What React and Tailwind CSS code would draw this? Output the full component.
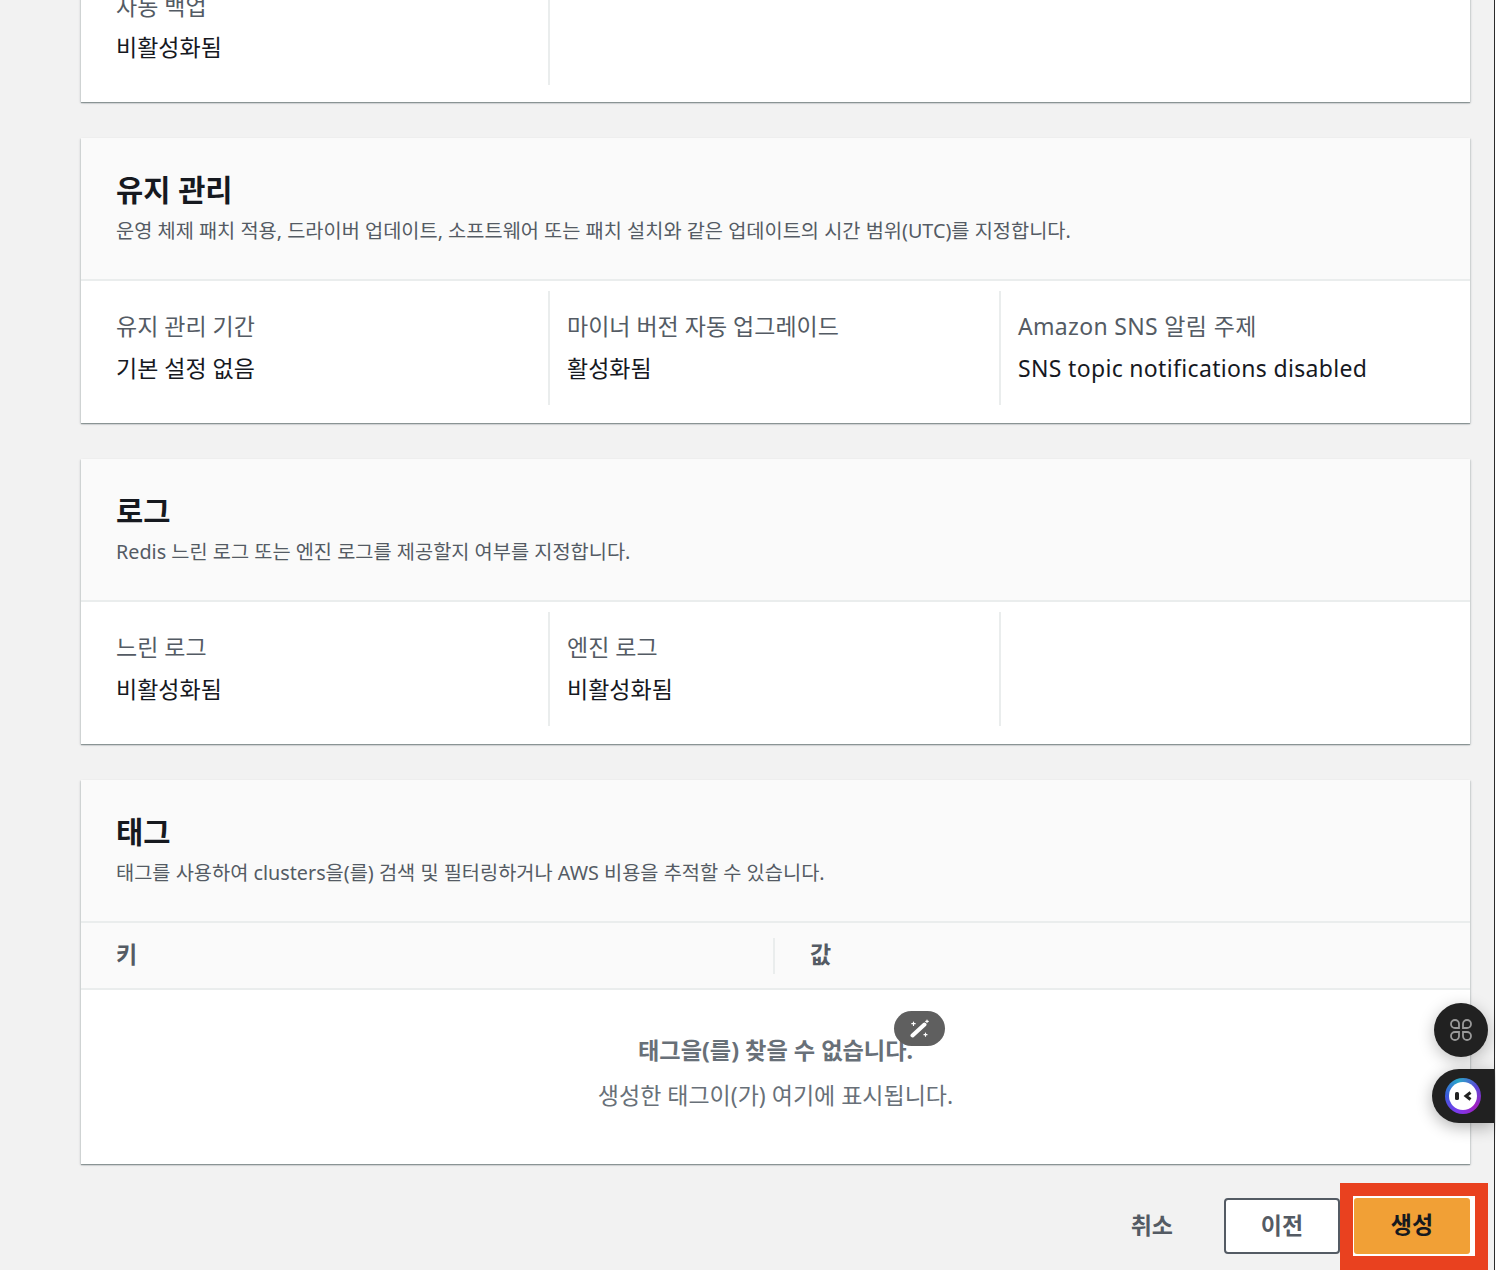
import React from "react";

const FONT = "font-['Noto_Sans','Noto_Sans_CJK_KR',sans-serif]";
const CARD = "bg-white shadow-[0_1px_1px_0_rgba(40,60,60,0.4),1px_1px_2px_0_rgba(0,28,36,0.12),-1px_1px_2px_0_rgba(0,28,36,0.12)]";

const Field = ({ label, value, first, wide }) => (
  <div className={`w-[451px] h-[114px] pt-[18px] pl-[17px] border-l-2 ${first ? "border-transparent" : "border-[#eaeded]"} ${wide ? "tracking-[0.33px]" : ""}`}>
    {label && <p className="text-[23px] leading-[34px] text-[#545b64]">{label}</p>}
    {value && <p className="mt-[8px] text-[23px] leading-[34px] text-[#16191f]">{value}</p>}
  </div>
);

const Header = ({ title, children }) => (
  <div className="h-[143px] bg-[#fafafa] border-b-2 border-[#eaeded] pl-[35px] pt-[29px]">
    <h2 className="text-[29.6px] leading-[46px] font-bold text-[#16191f]">{title}</h2>
    <p className="text-[19.75px] leading-[30px] mt-[3px] text-[#545b64]">{children}</p>
  </div>
);

const Section = ({ title, desc, fields }) => (
  <section className={CARD}>
    <Header title={title}>{desc}</Header>
    <div className="flex pl-[16px] pt-[10px] h-[142px]">
      {fields.map((f, i) => (
        <Field key={i} label={f[0]} value={f[1]} first={i === 0} wide={f[2]} />
      ))}
    </div>
  </section>
);

export default function App() {
  return (
    <div className={`${FONT} relative h-[1270px] w-[1496px] overflow-hidden bg-white`}>
      <div className="flex h-full w-[1495px] flex-col border-r border-[#2b2b2b] bg-[#f2f2f2] pl-[81px] pr-[24px]">
        <div className="flex flex-col gap-[36px]">
          <section className={`${CARD} -mt-[40px] h-[142px]`}>
            <div className="flex pl-[16px] h-[125px]">
              <div className="w-[453px] border-r-2 border-[#eaeded] pl-[19px] pt-[29px]">
                <p className="text-[23px] leading-[34px] text-[#545b64]">자동 백업</p>
                <p className="mt-[7px] text-[23px] leading-[34px] text-[#16191f]">비활성화됨</p>
              </div>
            </div>
          </section>

          <Section
            title="유지 관리"
            desc="운영 체제 패치 적용, 드라이버 업데이트, 소프트웨어 또는 패치 설치와 같은 업데이트의 시간 범위(UTC)를 지정합니다."
            fields={[
              ["유지 관리 기간", "기본 설정 없음"],
              ["마이너 버전 자동 업그레이드", "활성화됨"],
              ["Amazon SNS 알림 주제", "SNS topic notifications disabled", true],
            ]}
          />

          <Section
            title="로그"
            desc="Redis 느린 로그 또는 엔진 로그를 제공할지 여부를 지정합니다."
            fields={[
              ["느린 로그", "비활성화됨"],
              ["엔진 로그", "비활성화됨"],
              [null, null],
            ]}
          />

          <section className={`${CARD} h-[384px]`}>
            <Header title="태그">태그를 사용하여 clusters을(를) 검색 및 필터링하거나 AWS 비용을 추적할 수 있습니다.</Header>
            <div className="flex h-[67px] items-center bg-[#fafafa] border-b-2 border-[#eaeded] font-bold text-[23px] text-[#545b64]">
              <div className="w-[694px] h-[36px] flex items-center border-r-2 border-[#eaeded] pl-[35px] pb-[2px]">키</div>
              <div className="pl-[35px] pb-[2px]">값</div>
            </div>
            <div className="flex flex-col items-center pt-[43px] text-[#687078]">
              <p className="text-[23.2px] leading-[34px] font-bold">태그을(를) 찾을 수 없습니다.</p>
              <p className="mt-[11px] text-[23px] leading-[34px]">생성한 태그이(가) 여기에 표시됩니다.</p>
            </div>
          </section>
        </div>

        <div className="flex mt-[34px] items-center justify-end -mr-[18px]">
          <span className="mr-[51px] pb-[2px] text-[23px] font-bold text-[#545b64]">취소</span>
          <button className="h-[56px] w-[116px] rounded-[4px] border-2 border-[#545b64] bg-white pb-[2px] text-[23px] font-bold text-[#545b64]">
            이전
          </button>
          <div className="border-[13px] border-b-[14px] border-[#e9411f] h-[87px] w-[148px] -my-[20px] flex items-center pl-[1px] bg-white">
            <button className="h-[56px] w-[116px] rounded-[3px] bg-[#f1a036] pb-[2px] text-[23px] font-bold text-[#16191f]">
              생성
            </button>
          </div>
        </div>
      </div>

      {/* floating overlays */}
      <div className="absolute left-[894px] top-[1011px] flex h-[35px] w-[51px] items-center justify-center rounded-full bg-[#5f5f5f]">
        <svg width="20" height="20" viewBox="0 0 20 20" fill="none" stroke="#fff" strokeLinecap="round">
          <path d="M2.5 16.5L14.5 5.5" strokeWidth="4" />
          <path d="M3.5 3v3.4M1.8 4.7h3.4M17 1v2.6M15.7 2.3h2.6M15.5 14.2v3M14 15.7h3" strokeWidth="1.2" />
        </svg>
      </div>
      <div className="absolute left-[1434px] top-[1003px] flex h-[54px] w-[54px] items-center justify-center rounded-full bg-[#212121] shadow-[0_4px_16px_rgba(0,0,0,0.25)]">
        <svg width="26" height="26" viewBox="0 0 26 26" fill="none" stroke="#9a9a9a" strokeWidth="1.8">
          <path d="M11 11H7a4 4 0 1 1 4-4zM15 11h4a4 4 0 1 0-4-4zM11 15H7a4 4 0 1 0 4 4zM15 15h4a4 4 0 1 1-4 4z" />
        </svg>
      </div>
      <div className="absolute left-[1432px] top-[1069px] flex h-[54px] w-[62px] items-center rounded-l-full bg-[#212121] pl-[13px] shadow-[0_4px_16px_rgba(0,0,0,0.3)]">
        <div className="flex h-[36px] w-[36px] items-center justify-center rounded-full bg-[conic-gradient(from_200deg,#7c3aed,#3b5bdb,#2aa7c9,#5b46d6,#a020c0,#7c3aed)]">
          <svg width="28" height="28" viewBox="0 0 28 28">
            <circle cx="14" cy="14" r="14" fill="#fff" />
            <rect x="6" y="10" width="4" height="8" rx="1.6" fill="#212121" />
            <path d="M21.5 10.5l-4.5 3.5 4.5 3.5" fill="none" stroke="#212121" strokeWidth="3" />
          </svg>
        </div>
      </div>
    </div>
  );
}
